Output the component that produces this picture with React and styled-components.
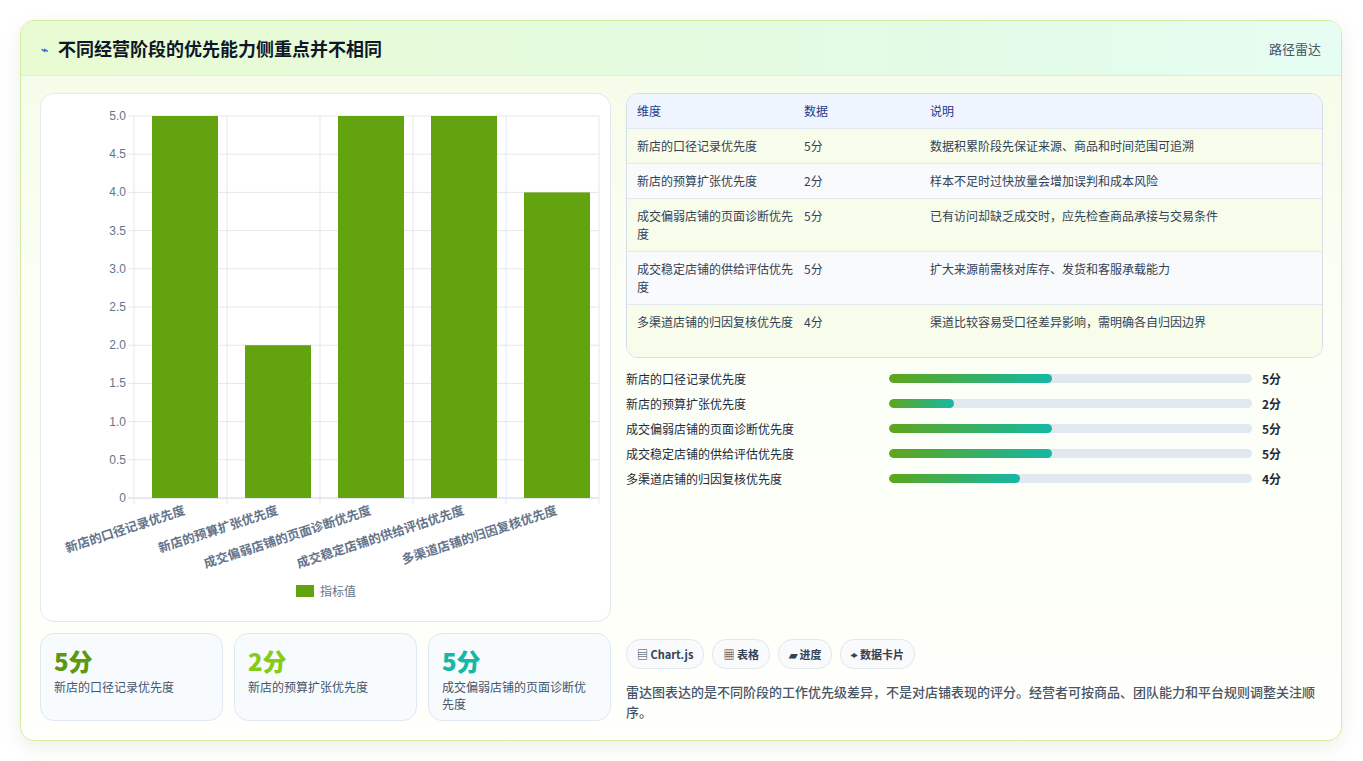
import React from "react";
import styled, { createGlobalStyle } from "styled-components";

const Global = createGlobalStyle`
  html,body{margin:0;padding:0;background:#fff;}
  body{font-family:"Noto Sans CJK SC","Noto Sans",sans-serif;color:#1f2937;}
`;
const Page = styled.div`padding:20px 21px 20px 20px;`;
const Card = styled.div`
  border:1px solid #cfeea0;border-radius:14px;overflow:hidden;
  background:linear-gradient(180deg,#f4fce6 0%,#fbfff6 40%,#fffffb 100%);
  box-shadow:0 6px 18px rgba(100,130,60,.12);height:719px;display:flex;flex-direction:column;
`;
const Header = styled.div`
  height:54px;display:flex;align-items:center;justify-content:space-between;
  padding:0 20px;border-bottom:1px solid #e2ecd6;
  background:linear-gradient(90deg,#e9fbd2,#e3fbe6 70%,#e6fdf2);
`;
const Title = styled.h1`margin:0;font-size:18px;font-weight:700;color:#0f172a;display:flex;align-items:center;gap:10px;`;
const Spark = styled.span`color:#3b6fd6;font-size:12px;`;
const Tag = styled.span`font-size:13px;color:#475569;`;
const Body = styled.div`flex:1;display:grid;grid-template-columns:571px 1fr;gap:15px;padding:17px 18px 18px 19px;`;
const Col = styled.div`display:flex;flex-direction:column;gap:11px;min-width:0;`;
const ChartCard = styled.div`height:527px;border:1px solid #e2e8f0;border-radius:14px;background:#fff;`;
const Stats = styled.div`display:grid;grid-template-columns:repeat(3,1fr);gap:11px;`;
const Stat = styled.div`height:88px;border:1px solid #dfe8f3;border-radius:14px;background:#f8fbfd;padding:12px 13px;box-sizing:border-box;`;
const StatNum = styled.div`font-size:24px;font-weight:800;color:${p=>p.c};line-height:30px;`;
const StatLabel = styled.div`font-size:12px;color:#475569;line-height:17px;margin-top:2px;`;
const Table = styled.div`border:1px solid #d6dde8;border-radius:12px;overflow:hidden;font-size:12px;`;
const Row = styled.div`
  display:grid;grid-template-columns:167px 126px 1fr;min-height:${p=>p.h}px;box-sizing:border-box;
  padding:8px 10px;background:${p=>p.bg};border-top:${p=>p.first?"none":"1px solid #e2e8f0"};
  color:${p=>p.head?"#1e3a8a":"#334155"};line-height:18px;align-items:${p=>p.head?"center":"start"};
  & > span:first-child{padding-right:10px;}
`;
const Bars = styled.div`display:flex;flex-direction:column;margin-top:-3px;`;
const BarRow = styled.div`display:grid;grid-template-columns:263px 363px auto;align-items:center;height:25px;font-size:12px;color:#1f2937;`;
const Track = styled.div`height:9px;border-radius:5px;background:#e2e8f0;overflow:hidden;`;
const Fill = styled.div`height:100%;border-radius:5px;background:linear-gradient(90deg,#5ea51a,#14b8a6);`;
const Val = styled.span`padding-left:10px;font-weight:700;`;
const Spacer = styled.div`flex:1;`;
const Chips = styled.div`display:flex;gap:8px;`;
const Chip = styled.span`height:28px;padding:0 10px;border:1px solid #e2e8f0;border-radius:14px;background:#f8fafc;font-size:11px;font-weight:700;color:#334155;display:flex;align-items:center;gap:3px;`;
const Note = styled.p`margin:2px 0 0;font-size:13px;line-height:20px;color:#475569;font-weight:500;`;

const data=[["新店的口径记录优先度",5,"数据积累阶段先保证来源、商品和时间范围可追溯"],["新店的预算扩张优先度",2,"样本不足时过快放量会增加误判和成本风险"],["成交偏弱店铺的页面诊断优先度",5,"已有访问却缺乏成交时，应先检查商品承接与交易条件"],["成交稳定店铺的供给评估优先度",5,"扩大来源前需核对库存、发货和客服承载能力"],["多渠道店铺的归因复核优先度",4,"渠道比较容易受口径差异影响，需明确各自归因边界"]];

function Chart(){
  const x0=93,x1=558,y0=404,yt=22,cw=93;
  const ticks=[0,0.5,1,1.5,2,2.5,3,3.5,4,4.5,5];
  const y=v=>y0-(v/5)*(y0-yt);
  return <svg width="569" height="525" style={{display:"block"}}>
    {ticks.map(t=><g key={t}><line x1={x0-6} x2={x1} y1={y(t)} y2={y(t)} stroke={t===0?"#cbd5e1":"#e5e7eb"}/>
      <text x={x0-8} y={y(t)+4} fontSize="12" textAnchor="end" fill="#64748b" fontFamily="Liberation Sans,sans-serif">{t===0?"0":t.toFixed(1)}</text></g>)}
    {[0,1,2,3,4,5].map(i=><line key={i} x1={x0+i*cw} x2={x0+i*cw} y1={yt} y2={y0+6} stroke="#e5e7eb"/>)}
    {data.map((d,i)=><rect key={i} x={x0+i*cw+18} y={y(d[1])} width={66} height={y0-y(d[1])} fill="#63a30f"/>)}
    {data.map((d,i)=><text key={i} transform={`translate(${x0+i*cw+52},${420}) rotate(-18)`} textAnchor="end" fontSize="12.5" fontWeight="700" fill="#64748b">{d[0]}</text>)}
    <rect x="255" y="491" width="18" height="12" fill="#63a30f"/>
    <text x="279" y="502" fontSize="12" fill="#64748b">指标值</text>
  </svg>;
}

export default function App(){
  const bgs=["#f7fdea","#f8fafc"];
  return <Page><Global/><Card>
    <Header><Title><Spark>⌁</Spark>不同经营阶段的优先能力侧重点并不相同</Title><Tag>路径雷达</Tag></Header>
    <Body>
      <Col>
        <ChartCard><Chart/></ChartCard>
        <Stats>
          <Stat><StatNum c="#5b9a10">5分</StatNum><StatLabel>新店的口径记录优先度</StatLabel></Stat>
          <Stat><StatNum c="#84cc16">2分</StatNum><StatLabel>新店的预算扩张优先度</StatLabel></Stat>
          <Stat><StatNum c="#14b8a6">5分</StatNum><StatLabel>成交偏弱店铺的页面诊断优先度</StatLabel></Stat>
        </Stats>
      </Col>
      <Col>
        <Table>
          <Row head first h={33} bg="#eef5ff"><span>维度</span><span>数据</span><span>说明</span></Row>
          {data.map((d,i)=><Row key={i} h={i<2?35:53} bg={bgs[i%2]}><span>{d[0]}</span><span>{d[1]}分</span><span>{d[2]}</span></Row>)}
        </Table>
        <Bars>{data.map((d,i)=><BarRow key={i}><span>{d[0]}</span><Track><Fill style={{width:`${d[1]*9}%`}}/></Track><Val>{d[1]}分</Val></BarRow>)}</Bars>
        <Spacer/>
        <Chips><Chip>▤ Chart.js</Chip><Chip>▦ 表格</Chip><Chip>▰ 进度</Chip><Chip>⌖ 数据卡片</Chip></Chips>
        <Note>雷达图表达的是不同阶段的工作优先级差异，不是对店铺表现的评分。经营者可按商品、团队能力和平台规则调整关注顺序。</Note>
      </Col>
    </Body>
  </Card></Page>;
}
